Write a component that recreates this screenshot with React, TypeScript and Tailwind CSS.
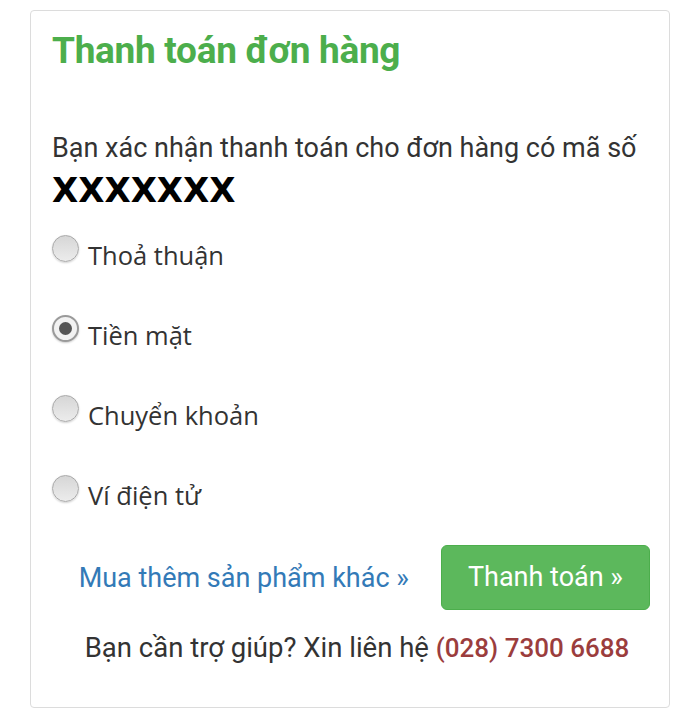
import React, { useState } from 'react';

const options = ['Thoả thuận', 'Tiền mặt', 'Chuyển khoản', 'Ví điện tử'];

const Radio: React.FC<{ checked: boolean }> = ({ checked }) =>
    checked ? (
        <span className="w-[27px] h-[27px] shrink-0 rounded-full border-2 border-[#9a9a9a] bg-[#f2f2f2] shadow-[0_1px_2px_rgba(0,0,0,0.2)] flex items-center justify-center">
            <span className="w-[13px] h-[13px] rounded-full bg-[#555]" />
        </span>
    ) : (
        <span className="w-[27px] h-[27px] shrink-0 rounded-full border border-[#a8a8a8] bg-gradient-to-b from-[#d6d6d6] to-[#ececec] shadow-[0_1px_2px_rgba(0,0,0,0.18)]" />
    );

export default function App() {
    const [selected, setSelected] = useState(1);

    return (
        <div className="w-[700px] h-[709px] bg-white font-['Roboto',sans-serif] text-[#333] pt-[10px] pl-[30px]">
            <div className="w-[640px] h-[698px] border border-[#dcdcdc] rounded-[4px] pl-[21px] pr-[19px] pt-[18px]">
                <h2 className="text-[37px] leading-[44px] font-bold text-[#4cae4c] tracking-[-0.3px]">
                    Thanh toán đơn hàng
                </h2>

                <p className="mt-[59px] text-[27px] leading-[32px]">
                    Bạn xác nhận thanh toán cho đơn hàng có mã số
                </p>
                <div className="mt-[6px] font-['DejaVu_Sans',sans-serif] font-bold text-[34px] leading-[40px] text-black">
                    XXXXXXX
                </div>

                {/* Payment methods */}
                <div className="mt-[25px] flex flex-col gap-[43px]">
                    {options.map((opt, i) => (
                        <label
                            key={opt}
                            className="flex items-start gap-[9px] cursor-pointer"
                            onClick={() => setSelected(i)}
                        >
                            <Radio checked={selected === i} />
                            <span className="pt-[3px] font-['Open_Sans',sans-serif] text-[25.5px] leading-[34px]">
                                {opt}
                            </span>
                        </label>
                    ))}
                </div>

                <div className="mt-[33px] flex items-center justify-end gap-[32px]">
                    <a href="#" className="text-[#337ab7] text-[27px] leading-[32px]">
                        Mua thêm sản phẩm khác »
                    </a>
                    <button className="h-[65px] px-[26px] bg-[#5cb85c] border border-[#4cae4c] rounded-[6px] text-white text-[27px]">
                        Thanh toán »
                    </button>
                </div>

                <p className="mt-[22px] pl-[12px] text-center text-[27.5px] leading-[32px]">
                    Bạn cần trợ giúp? Xin liên hệ{' '}
                    <span className="font-medium text-[26px] text-[#9b3d3d]">(028) 7300 6688</span>
                </p>
            </div>
        </div>
    );
}
